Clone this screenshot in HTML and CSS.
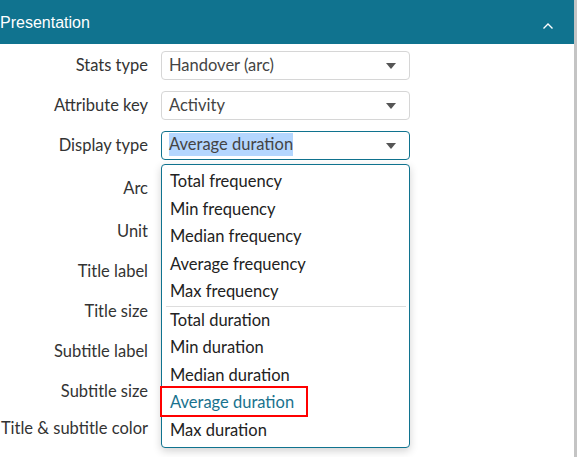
FILE: index.html
```html
<!DOCTYPE html>
<html>
<head>
<meta charset="utf-8">
<link rel="stylesheet" href="styles.css">
</head>
<body>
<div class="page">
  <div class="panel">
    <div class="header">
      <span class="title">Presentation</span>
      <svg class="chev" width="12" height="8" viewBox="0 0 12 8"><path d="M1.5 6.5 L6 2 L10.5 6.5" fill="none" stroke="#fff" stroke-width="1.4"/></svg>
    </div>
    <div class="form">
      <div class="row r-sel">
        <div class="label">Stats type</div>
        <div class="select"><span>Handover (arc)</span><i class="caret"></i></div>
      </div>
      <div class="row r-sel">
        <div class="label">Attribute key</div>
        <div class="select"><span>Activity</span><i class="caret"></i></div>
      </div>
      <div class="row r-sel">
        <div class="label">Display type</div>
        <div class="select focus"><span class="sel-text">Average duration</span><i class="caret"></i>
          <div class="menu">
            <div class="item">Total frequency</div>
            <div class="item">Min frequency</div>
            <div class="item">Median frequency</div>
            <div class="item">Average frequency</div>
            <div class="item">Max frequency</div>
            <div class="sep"></div>
            <div class="item">Total duration</div>
            <div class="item">Min duration</div>
            <div class="item">Median duration</div>
            <div class="item active">Average duration</div>
            <div class="item">Max duration</div>
          </div>
        </div>
      </div>
      <div class="row h36"><div class="label">Arc</div><div></div></div>
      <div class="row h28"><div class="label">Unit</div><div></div></div>
      <div class="row h30"><div class="label">Title label</div><div></div></div>
      <div class="row h28"><div class="label">Title size</div><div></div></div>
      <div class="row h30"><div class="label">Subtitle label</div><div></div></div>
      <div class="row h28"><div class="label">Subtitle size</div><div></div></div>
      <div class="row h24"><div class="label">Title &amp; subtitle color</div><div></div></div>
      <div class="row h24">
        <div class="label">Title &amp; subtitle alignment</div>
        <div class="radios">
          <label class="radio"><i class="dot on"></i>Left</label>
          <label class="radio"><i class="dot"></i>Center</label>
          <label class="radio"><i class="dot"></i>Right</label>
        </div>
      </div>
    </div>
  </div>
  <div class="scrollbar"></div>
</div>
</body>
</html>
```
FILE: styles.css
```css
html, body { margin: 0; padding: 0; background: #fff; overflow: hidden; }
body { width: 577px; height: 457px; font-family: "Lato", "Open Sans", sans-serif; }
.page { display: flex; width: 577px; height: 457px; }
.panel { width: 574px; flex: none; }
.scrollbar { flex: 1; background: #c4c4c4; }
.header {
  height: 44px; background: #10738f; display: flex; align-items: center;
  justify-content: space-between; padding: 0 20px 0 0; box-sizing: border-box;
}
.title { font-family: "Liberation Sans", Arial, sans-serif; font-size: 16px; color: #fff; margin-top: 1px; }
.chev { margin-top: 7px; }
.form { padding-top: 7px; }
.row {
  display: grid; grid-template-columns: 148px 249px; column-gap: 13px;
  align-items: center; margin-bottom: 11px;
}
.r-sel { height: 29px; }
.h36 { height: 36px; }
.h30 { height: 30px; }
.h28 { height: 28px; }
.h24 { height: 24px; }
.label { text-align: right; font-size: 16.5px; color: #333; white-space: nowrap; margin-top: -2px; }
.select {
  position: relative; height: 29px; box-sizing: border-box; border: 1px solid #d6d6d6;
  border-radius: 4px; display: flex; align-items: center; padding-left: 7px;
  font-size: 16.5px; color: #444;
}
.select > span { margin-top: -2px; }
.select.focus { border-color: #10738f; }
.sel-text { background: #b4d6fe; padding: 1px 0 2px; }
.caret {
  position: absolute; right: 13px; top: 11px; width: 0; height: 0;
  border-left: 5px solid transparent; border-right: 5px solid transparent; border-top: 6px solid #555;
}
.menu {
  position: absolute; left: -1px; top: 32px; width: 249px; height: 284px; box-sizing: border-box;
  background: #fff; border: 1px solid #10738f; border-radius: 4px;
  box-shadow: 0 3px 8px rgba(0,0,0,0.18); padding: 3px 0 0 0; z-index: 5;
}
.item { height: 27.5px; line-height: 27px; padding-left: 8px; font-size: 16.5px; color: #222; box-sizing: border-box; position: relative; }
.sep { height: 1px; background: #ddd; margin: 0 3px 0 4px; }
.item.active { color: #19728e; }
.item.active::after {
  content: ""; position: absolute; left: -2px; top: -3px; width: 148px; height: 31px;
  box-sizing: border-box; border: 2.5px solid #ff0000;
}
.radios { display: flex; align-items: center; gap: 0; padding-top: 14px; }
.radio { display: flex; align-items: center; font-size: 16.5px; color: #333; margin-right: 20px; }
.dot { width: 17px; height: 17px; border-radius: 50%; border: 1px solid #bbb; margin-right: 9px; box-sizing: border-box; margin-left: 2px; }
.dot.on { background: #10738f; border-color: #10738f; }
```
